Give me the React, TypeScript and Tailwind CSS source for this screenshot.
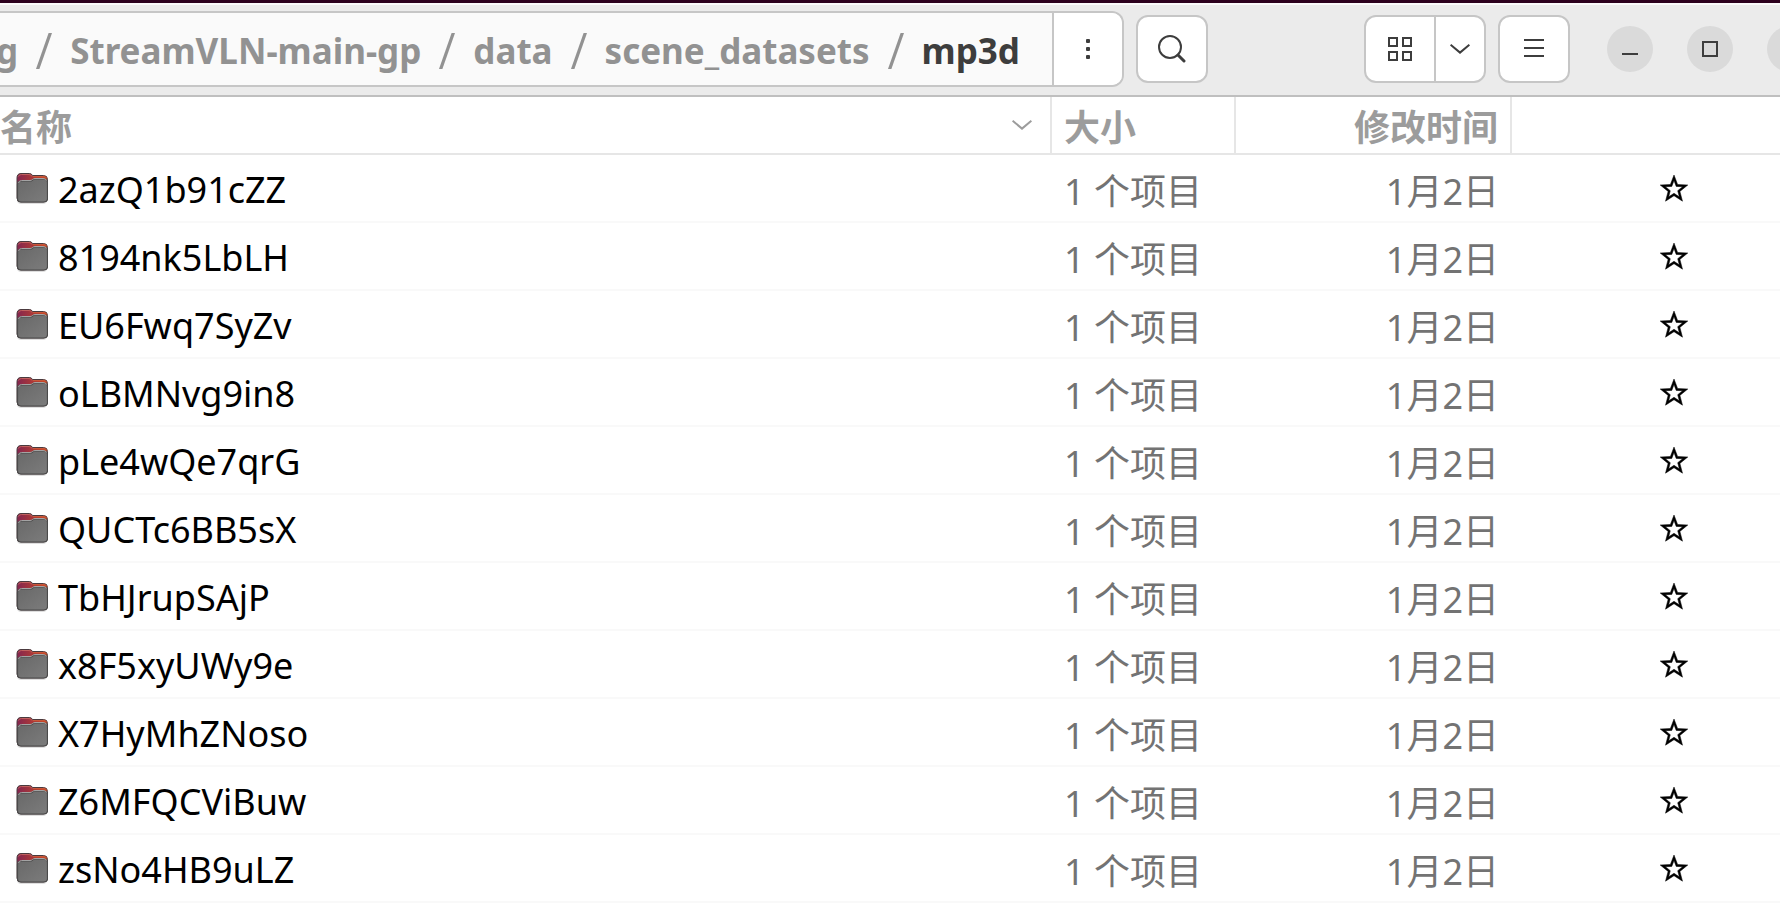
import { Fragment } from "react";
import type { ReactNode } from "react";

const parents = ["g", "StreamVLN-main-gp", "data", "scene_datasets"];

const folders = [
  "2azQ1b91cZZ",
  "8194nk5LbLH",
  "EU6Fwq7SyZv",
  "oLBMNvg9in8",
  "pLe4wQe7qrG",
  "QUCTc6BB5sX",
  "TbHJrupSAjP",
  "x8F5xyUWy9e",
  "X7HyMhZNoso",
  "Z6MFQCViBuw",
  "zsNo4HB9uLZ"
];

export default function App() {
  return (
    <div className="min-h-screen overflow-hidden bg-white font-['Noto_Sans','Noto_Sans_CJK_SC',sans-serif] text-[36px] leading-[48px] text-black">
      <div className="h-[3px] bg-[#2c001e]" />
      <HeaderBar />
      <FileList />
    </div>
  );
}

function HeaderBar() {
  return (
    <header className="flex h-[94px] items-center gap-3 border-t-2 border-b-2 border-t-[#fafafa] border-b-[#bfbfbf] bg-[#ebebeb] pb-[2px] text-[#3d3d3d]">
      <div className="flex h-[76px] min-w-0 grow basis-0 overflow-hidden rounded-r-xl border-2 border-l-0 border-[#c6c6c6] bg-[#fafafa]">
        <nav aria-label="路径" className="flex min-w-0 flex-1 items-center justify-end gap-[18px] overflow-hidden pt-1 pr-8 text-[35px] font-bold whitespace-nowrap">
          {parents.map((name) => (
            <Fragment key={name}>
              <button type="button" className="shrink-0 text-[#929292]">{name}</button>
              <Slash />
            </Fragment>
          ))}
          <button type="button" aria-current="page" className="shrink-0">mp3d</button>
        </nav>
        <button type="button" aria-label="更多" className="grid w-[70px] shrink-0 place-items-center border-l-2 border-[#c6c6c6] bg-white">
          <svg width="4" height="20" viewBox="0 0 4 20" fill="currentColor">
            <rect width="4" height="4" rx="1" />
            <rect y="8" width="4" height="4" rx="1" />
            <rect y="16" width="4" height="4" rx="1" />
          </svg>
        </button>
      </div>

      <ToolButton label="搜索">
        <svg width="28" height="28" viewBox="0 0 28 28" fill="none" stroke="currentColor">
          <circle cx="12" cy="12" r="11" strokeWidth="2" />
          <path d="M20 20l6 6" strokeWidth="3" strokeLinecap="round" />
        </svg>
      </ToolButton>

      <div className="ml-36 flex h-[68px] shrink-0 overflow-hidden rounded-xl border-2 border-[#c6c6c6] bg-white">
        <button type="button" aria-label="图标视图" className="grid w-[68px] place-items-center">
          <svg width="24" height="24" viewBox="0 0 24 24" fill="none" stroke="currentColor" strokeWidth="2">
            <path d="M1 1h8v8H1zM15 1h8v8h-8zM1 15h8v8H1zM15 15h8v8h-8z" />
          </svg>
        </button>
        <button type="button" aria-label="视图选项" className="grid w-[50px] place-items-center border-l-2 border-[#c6c6c6]">
          <Chevron />
        </button>
      </div>

      <ToolButton label="主菜单">
        <svg width="20" height="20" viewBox="0 0 20 20" fill="currentColor">
          <path d="M0 0h20v2H0zM0 8h20v2H0zM0 16h20v2H0z" />
        </svg>
      </ToolButton>

      <div className="-mr-[33px] ml-[25px] flex shrink-0 gap-[34px]">
        <WindowButton label="最小化">
          <path d="M0 12h16v2H0z" fill="currentColor" />
        </WindowButton>
        <WindowButton label="最大化">
          <path d="M1 1h14v14H1z" stroke="currentColor" strokeWidth="2" />
        </WindowButton>
        <WindowButton label="关闭">
          <path d="M2 2l12 12M14 2L2 14" stroke="currentColor" strokeWidth="2" />
        </WindowButton>
      </div>
    </header>
  );
}

function FileList() {
  return (
    <table className="w-full table-fixed border-separate border-spacing-0">
      <colgroup>
        <col />
        <col className="w-[184px]" />
        <col className="w-[276px]" />
        <col className="w-[268px]" />
      </colgroup>
      <thead>
        <tr className="h-[58px] text-[#9c9c9c]">
          <th className="border-r-2 border-b-2 border-[#e6e6e6] p-0">
            <button type="button" className="flex w-full items-center justify-between pr-[18px] text-left">
              <span className="pt-1.5">名称</span>
              <Chevron />
            </button>
          </th>
          <th className="border-r-2 border-b-2 border-[#e6e6e6] p-0 pt-1.5 pl-3 text-left">
            <button type="button">大小</button>
          </th>
          <th className="border-r-2 border-b-2 border-[#e6e6e6] p-0 pt-1.5 pr-3 text-right">
            <button type="button">修改时间</button>
          </th>
          <th className="border-b-2 border-[#e6e6e6] p-0" />
        </tr>
      </thead>
      <tbody>
        {folders.map((name) => (
          <tr key={name} className="h-[68px]">
            <td className="border-b-2 border-[#f9f9f9] p-0 pl-4">
              <div className="flex items-center gap-[10px]">
                <FolderIcon />
                <span className="pt-1">{name}</span>
              </div>
            </td>
            <td className="border-b-2 border-[#f9f9f9] p-0 pt-2 pl-3 text-[#737373]">1 个项目</td>
            <td className="border-b-2 border-[#f9f9f9] p-0 pt-2 pr-[13px] text-right text-[#737373]">1月2日</td>
            <td className="border-b-2 border-[#f9f9f9] p-0 pr-[92px]">
              <button type="button" aria-label={`收藏 ${name}`} className="ml-auto block">
                <StarIcon />
              </button>
            </td>
          </tr>
        ))}
      </tbody>
    </table>
  );
}

function Slash() {
  return (
    <svg width="16" height="38" viewBox="0 0 16 38" className="shrink-0 text-[#929292]">
      <path d="M12.6 1H16L3.4 37H0z" fill="currentColor" />
    </svg>
  );
}

function Chevron() {
  return (
    <svg width="20" height="10" viewBox="0 0 20 10" fill="none" stroke="currentColor" strokeWidth="2">
      <path d="M.6.8L10 8.6 19.4.8" />
    </svg>
  );
}

function ToolButton({ label, children }: { label: string; children: ReactNode }) {
  return (
    <button type="button" aria-label={label} className="grid h-[68px] w-[72px] shrink-0 place-items-center rounded-xl border-2 border-[#c6c6c6] bg-white">
      {children}
    </button>
  );
}

function WindowButton({ label, children }: { label: string; children: ReactNode }) {
  return (
    <button type="button" aria-label={label} className="grid size-[46px] place-items-center rounded-full bg-[#dadada]">
      <svg width="16" height="16" viewBox="0 0 16 16" fill="none">
        {children}
      </svg>
    </button>
  );
}

function StarIcon() {
  return (
    <svg width="28" height="28" viewBox="0 -1 28 28" fill="black" fillRule="evenodd" stroke="black" strokeWidth=".5">
      <path d="M14 0l3.6 9.500 10.200.5-7.900 6.400 2.600 9.800L14 20.700l-8.500 5.500 2.600-9.800L.2 10l10.200-.5zM14 5.500l-2.200 5.900-6.400.3 4.900 4-1.600 6.100 5.300-3.500 5.300 3.500-1.600-6.100 4.900-4-6.400-.3z" />
    </svg>
  );
}

function FolderIcon() {
  return (
    <svg width="32" height="32" viewBox="0 0 32 32" className="shrink-0">
      <defs>
        <linearGradient id="folder-back" x1="0" x2="1">
          <stop offset="0" stopColor="#842650" />
          <stop offset="1" stopColor="#d04a20" />
        </linearGradient>
        <linearGradient id="folder-front" x1="0" y1="0" x2="1" y2="1">
          <stop offset="0" stopColor="#686868" />
          <stop offset="1" stopColor="#7c7c7c" />
        </linearGradient>
      </defs>
      <rect x="1" y="20" width="30" height="12" rx="4" fill="#000" opacity=".13" />
      <path d="M1 6q0-4.500 4-4.500h8.500q2 0 3 2h11q4 0 4 4v18.500q0 4-4 4H5q-4 0-4-4z" fill="url(#folder-back)" stroke="#4a3a3e" />
      <path d="M2.500 4.500q.5-2 3-2h7.500q2 0 3 2" fill="none" stroke="#c0605e" />
      <path d="M17 4.500h10.500q2.500 0 3 1.500" fill="none" stroke="#c8583a" />
      <path d="M1.500 12.500q0-3.500 3.500-3.500h9q1.500 0 2.500-1t2.500-1h8.500q4 0 4 3.500v16q0 3.500-4 3.500H5q-3.500 0-3.500-3.500z" fill="url(#folder-front)" stroke="#4a4a4a" strokeWidth="1.200" />
      <path d="M2.500 11q.5-2.500 3-2.500h8.500q1.500 0 2.500-1t2.500-1h8q3 0 3.500 2" fill="none" stroke="#a3a3a3" />
    </svg>
  );
}
